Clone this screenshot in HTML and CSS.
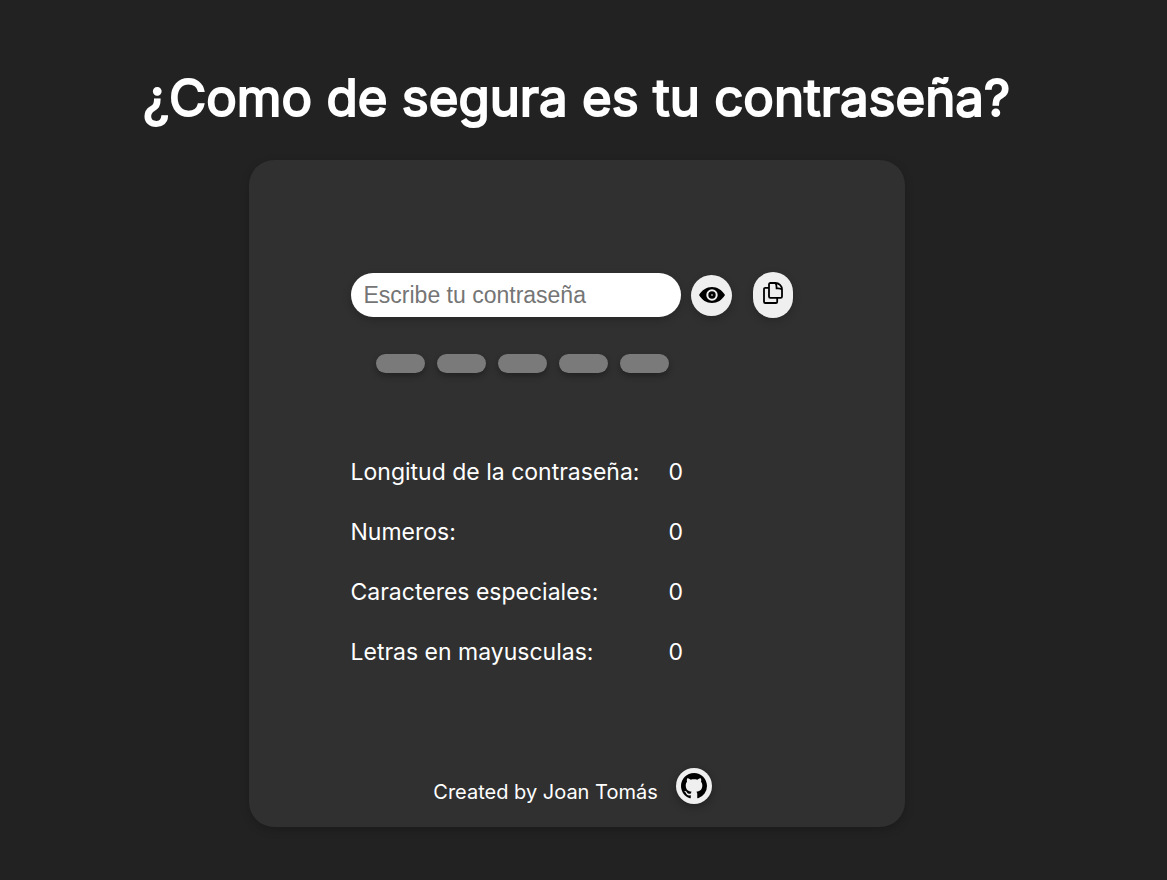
FILE: index.html
```html
<!DOCTYPE html>
<html lang="es">
<head>
<meta charset="utf-8">
<meta name="viewport" content="width=device-width, initial-scale=1">
<title>¿Como de segura es tu contraseña?</title>
<link rel="stylesheet" href="styles.css">
</head>
<body>
<main class="page">
  <h1 class="title">¿Como de segura es tu contraseña?</h1>
  <section class="card">
    <form class="entry">
      <input class="password" type="password" placeholder="Escribe tu contraseña" aria-label="Escribe tu contraseña">
      <button class="round-btn" type="button" aria-label="Mostrar contraseña">
        <svg class="eye" viewBox="0 0 27 16" aria-hidden="true"><path fill-rule="evenodd" d="M1 8C4 3 8.500 0 14 0s10 3 13 8c-3 5-7.500 8-13 8S4 13 1 8zm13-5.700a5.700 5.700 0 1 0 0 11.400 5.700 5.700 0 0 0 0-11.400z"/><circle cx="14" cy="8" r="3.700"/><circle cx="14" cy="8" r="1" fill="#999"/></svg>
      </button>
      <button class="round-btn copy-btn" type="button" aria-label="Copiar contraseña">
        <svg class="copy" viewBox="0 0 20 22" aria-hidden="true"><path d="M7.300 1h5.200c3.400 0 6.500 3.100 6.500 6.500v7a1.300 1.300 0 0 1-1.300 1.300H7.300A1.300 1.300 0 0 1 6 14.500V2.300A1.300 1.300 0 0 1 7.300 1zM12.400 1.200c1.400 1 1 3.300 1.200 5.200 1.900.2 4.200-.2 5.200 1.200M6 5.800H2.300A1.300 1.300 0 0 0 1 7.100v12.600A1.300 1.300 0 0 0 2.300 21h10.600a1.300 1.300 0 0 0 1.300-1.300v-4"/></svg>
      </button>
    </form>
    <div class="meter"><span class="bar"></span><span class="bar"></span><span class="bar"></span><span class="bar"></span><span class="bar"></span></div>
    <dl class="stats">
      <dt>Longitud de la contraseña:</dt><dd>0</dd>
      <dt>Numeros:</dt><dd>0</dd>
      <dt>Caracteres especiales:</dt><dd>0</dd>
      <dt>Letras en mayusculas:</dt><dd>0</dd>
    </dl>
    <footer class="credit">
      <span>Created by Joan Tomás</span>
      <a class="github" href="#" aria-label="GitHub"><svg viewBox="0 0 16 16" aria-hidden="true"><path d="M8 0C3.580 0 0 3.580 0 8c0 3.540 2.290 6.530 5.470 7.590.4.070.55-.17.55-.38 0-.19-.01-.82-.01-1.490-2.010.37-2.530-.49-2.690-.94-.09-.23-.48-.94-.82-1.130-.28-.15-.68-.52-.01-.53.63-.01 1.080.58 1.230.82.72 1.210 1.870.87 2.330.66.07-.52.28-.87.51-1.070-1.780-.2-3.640-.89-3.640-3.950 0-.87.31-1.590.82-2.150-.08-.2-.36-1.020.08-2.120 0 0 .67-.21 2.200.82.64-.18 1.320-.27 2-.27s1.360.09 2 .27c1.530-1.040 2.200-.82 2.200-.82.44 1.100.16 1.920.08 2.120.51.56.82 1.270.82 2.150 0 3.070-1.870 3.750-3.650 3.950.29.25.54.73.54 1.480 0 1.070-.01 1.930-.01 2.200 0 .21.15.46.55.38A8.010 8.010 0 0 0 16 8c0-4.420-3.580-8-8-8z"/></svg></a>
    </footer>
  </section>
</main>
</body>
</html>
```
FILE: styles.css
```css
* { box-sizing: border-box; }
body {
  margin: 0;
  min-height: 100vh;
  background: #222;
  color: #fff;
  font-family: Inter, "Liberation Sans", sans-serif;
}
.page {
  display: flex;
  flex-direction: column;
  align-items: center;
  gap: 30px;
  padding: 66px 14px 52px 0;
}
.title {
  margin: 0;
  font-size: 51px;
  line-height: 64px;
  font-weight: 400;
  -webkit-text-stroke: 2px #fff;
  text-align: center;
}
.card {
  width: 100%;
  max-width: 656px;
  padding: 112px 102px 23px;
  border-radius: 25px;
  background: #303030;
  box-shadow: 0 3px 10px rgba(0, 0, 0, .2);
}
.entry { display: flex; align-items: center; }
.password {
  flex: 0 1 330px;
  min-width: 0;
  height: 44px;
  padding: 0 13px;
  border: 0;
  border-radius: 22px;
  background: #fff;
  font: 23px "Liberation Sans", sans-serif;
  box-shadow: 0 3px 8px rgba(0, 0, 0, .2);
}
.password::placeholder { color: #757575; }
.round-btn {
  display: grid;
  flex: none;
  place-items: center;
  width: 41px;
  height: 41px;
  margin-left: 10px;
  padding: 0;
  border: 0;
  border-radius: 24px;
  background: #efefef;
  box-shadow: 0 3px 8px rgba(0, 0, 0, .2);
}
.copy-btn {
  width: 40px;
  height: 46px;
  margin-left: 21px;
  padding-bottom: 4px;
}
.eye { width: 27px; height: 16px; }
.copy { width: 20px; height: 22px; fill: none; stroke: #000; stroke-width: 1.8; }
.meter { display: flex; gap: 12px; margin: 36px 0 0 25px; }
.bar {
  width: 49px;
  height: 19px;
  border-radius: 10px;
  background: #7a7a7a;
  box-shadow: 0 3px 6px rgba(0, 0, 0, .3);
}
.stats {
  display: grid;
  grid-template-columns: 318px auto;
  justify-content: start;
  row-gap: 30px;
  margin: 84px 0 0;
  font-size: 23px;
  line-height: 30px;
}
.stats dd { margin: 0; }
.credit {
  display: flex;
  align-items: flex-end;
  justify-content: center;
  gap: 18px;
  margin-top: 101px;
  padding-right: 8px;
  font-size: 20px;
  line-height: 24px;
}
.github {
  display: grid;
  place-items: center;
  width: 36px;
  height: 36px;
  border-radius: 50%;
  background: #efefef;
  box-shadow: 0 3px 8px rgba(0, 0, 0, .3);
}
.github svg { width: 26px; height: 26px; }
```
